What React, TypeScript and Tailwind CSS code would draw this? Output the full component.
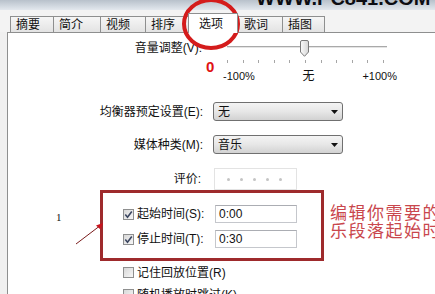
import React from 'react';

const tabs = [
  { label: '摘要', w: 'w-[43px]' },
  { label: '简介', w: 'w-[47px]' },
  { label: '视频', w: 'w-[45px]' },
  { label: '排序', w: 'w-[43px]' },
  { label: '选项', w: 'w-[50px]', active: true },
  { label: '歌词', w: 'w-[44px]' },
  { label: '插图', w: 'w-[43px]' },
];

function Check({ checked }: { checked: boolean }) {
  return (
    <span className="w-[11px] h-[11px] border border-[#8e8f8f] bg-gradient-to-br from-[#d8d8d8] to-[#f7f7f7] flex items-center justify-center shrink-0">
      {checked && (
        <svg width="9" height="9" viewBox="0 0 9 9">
          <path d="M1.3 4.6 L3.5 7.2 L7.8 1.4" stroke="#3b4660" strokeWidth="1.6" fill="none" />
        </svg>
      )}
    </span>
  );
}

function Select({ value }: { value: string }) {
  return (
    <div className="w-[130px] h-[19px] rounded-[3px] border border-[#707070] bg-gradient-to-b from-[#f4f4f4] via-[#e7e7e7] to-[#d2d2d2] flex items-center pl-[4px] pr-[4px]">
      <span className="flex-1 text-[12px] leading-none">{value}</span>
      <svg width="7" height="4" viewBox="0 0 7 4">
        <path d="M0 0 H7 L3.5 4 Z" fill="#111" />
      </svg>
    </div>
  );
}

function TimeInput({ value }: { value: string }) {
  return (
    <div className="ml-[2px] w-[82px] h-[18px] border border-[#c5c7cc] border-t-[#abadb3] bg-white flex items-center pl-[3px] text-[12px] leading-none">
      {value}
    </div>
  );
}

export default function App() {
  return (
    <div className="w-[435px] h-[294px] overflow-hidden relative bg-[#f0f0f0] flex flex-col font-['Liberation_Sans','Noto_Sans_CJK_SC',sans-serif] text-[#111]">
      {/* window chrome */}
      <div className="h-[10px] bg-gradient-to-b from-[#b8c1cb] to-[#e3e8ee] shrink-0" />

      {/* tab strip */}
      <div className="h-[22px] shrink-0 flex items-end pl-[10px] bg-[#f3f3f3]">
        {tabs.map((t) =>
          t.active ? (
            <div
              key={t.label}
              className={`${t.w} h-[20px] -mb-px relative z-10 bg-white border border-b-0 border-[#8e8f8f] flex items-center pl-[10px] text-[12px]`}
            >
              {t.label}
            </div>
          ) : (
            <div
              key={t.label}
              className={`${t.w} h-[16px] bg-gradient-to-b from-[#f6f6f6] to-[#e3e3e3] border border-b-0 border-r-0 last:border-r border-[#8e8f8f] flex items-center pl-[5px] text-[12px]`}
            >
              {t.label}
            </div>
          ),
        )}
      </div>

      {/* panel */}
      <div className="flex-1 ml-[7px] bg-white border-l border-t border-[#8e8f8f] flex flex-col text-[12px]">
        {/* volume */}
        <div className="mt-[5px] h-[19px] flex items-center">
          <div className="w-[205px] text-right pr-[11px]">音量调整(V):</div>
          <div className="ml-[14px] w-[160px] h-full relative flex items-center">
            <div className="w-full h-[3px] border-t border-[#a9a9a9] border-b border-b-white bg-[#e4e4e4]" />
            <svg className="absolute left-[73px] top-[2px]" width="9" height="17" viewBox="0 0 9 17">
              <defs>
                <linearGradient id="th" x1="0" y1="0" x2="1" y2="0">
                  <stop offset="0" stopColor="#fbfbfb" />
                  <stop offset="1" stopColor="#d6d6d6" />
                </linearGradient>
              </defs>
              <path d="M0.5 2 Q0.5 0.5 2 0.5 H7 Q8.5 0.5 8.5 2 V12 L4.5 16.3 L0.5 12 Z" fill="url(#th)" stroke="#7a7a7a" />
            </svg>
          </div>
        </div>

        {/* ticks */}
        <div className="h-[7px] pt-[3px] ml-[219px] w-[157px] flex justify-between">
          {Array.from({ length: 11 }).map((_, i) => (
            <span key={i} className="w-px h-[3px] bg-[#a6a6a6]" />
          ))}
        </div>

        {/* scale labels */}
        <div className="h-[26px] pt-[5px] ml-[215px] w-[174px] flex justify-between text-[11px] leading-[14px]">
          <span>-100%</span>
          <span className="text-[12px]">无</span>
          <span>+100%</span>
        </div>

        {/* equalizer */}
        <div className="mt-[12px] h-[19px] flex items-center">
          <div className="w-[205px] text-right pr-[10px]">均衡器预定设置(E):</div>
          <Select value="无" />
        </div>

        {/* media type */}
        <div className="mt-[14px] h-[19px] flex items-center">
          <div className="w-[205px] text-right pr-[10px]">媒体种类(M):</div>
          <Select value="音乐" />
        </div>

        {/* rating */}
        <div className="mt-[14px] h-[22px] flex items-center">
          <div className="w-[205px] text-right pr-[12px]">评价:</div>
          <div className="ml-px w-[83px] h-[22px] border border-[#e3e3e3] flex items-center pl-[12px] gap-[10px]">
            {Array.from({ length: 5 }).map((_, i) => (
              <span key={i} className="w-[3px] h-[3px] rounded-full bg-[#c4c4c4]" />
            ))}
          </div>
        </div>

        {/* start time */}
        <div className="mt-[15px] h-[18px] flex items-center">
          <div className="w-[205px] pl-[115px] flex items-center gap-[3px]">
            <Check checked />
            <span>起始时间(S):</span>
          </div>
          <TimeInput value="0:00" />
        </div>

        {/* stop time */}
        <div className="mt-[7px] h-[18px] flex items-center">
          <div className="w-[205px] pl-[115px] flex items-center gap-[3px]">
            <Check checked />
            <span>停止时间(T):</span>
          </div>
          <TimeInput value="0:30" />
        </div>

        {/* remember */}
        <div className="mt-[17px] h-[15px] pl-[115px] flex items-center gap-[3px]">
          <Check checked={false} />
          <span>记住回放位置(R)</span>
        </div>
        <div className="mt-[7px] h-[15px] pl-[115px] flex items-center gap-[3px]">
          <Check checked={false} />
          <span>随机播放时跳过(K)</span>
        </div>
      </div>

      {/* annotations */}
      <div className="absolute left-[256px] top-[-12px] text-[20px] font-bold leading-none text-[#0d0d12] whitespace-nowrap">
        WWW.PC841.COM
      </div>
      <svg className="absolute left-[180px] top-[-2px]" width="62" height="54" viewBox="0 0 62 54">
        <ellipse cx="31" cy="26" rx="27" ry="24" fill="none" stroke="#d41c1c" strokeWidth="4" />
      </svg>
      <div className="absolute left-[206px] top-[59px] text-[15px] font-bold leading-none text-[#e01212]">0</div>
      <div className="absolute left-[100px] top-[190px] w-[224px] h-[71px] border-[3px] border-[#9e2a2c]" />
      <div className="absolute left-[56px] top-[212px] text-[11px] leading-none font-['Liberation_Serif',serif]">1</div>
      <svg className="absolute left-[70px] top-[218px]" width="40" height="32" viewBox="0 0 40 32">
        <line x1="6" y1="26" x2="31" y2="7" stroke="#7a1c1c" strokeWidth="1" />
        <path d="M33 5 L26 7.5 L30.5 11.5 Z" fill="#c8141e" />
      </svg>
      <div className="absolute left-[330px] top-[203px] text-[17px] leading-[18px] tracking-[1.5px] text-[#c9474d] whitespace-nowrap font-['Noto_Sans_CJK_SC',sans-serif]">
        <div>编辑你需要的</div>
        <div>乐段落起始时</div>
      </div>
    </div>
  );
}
